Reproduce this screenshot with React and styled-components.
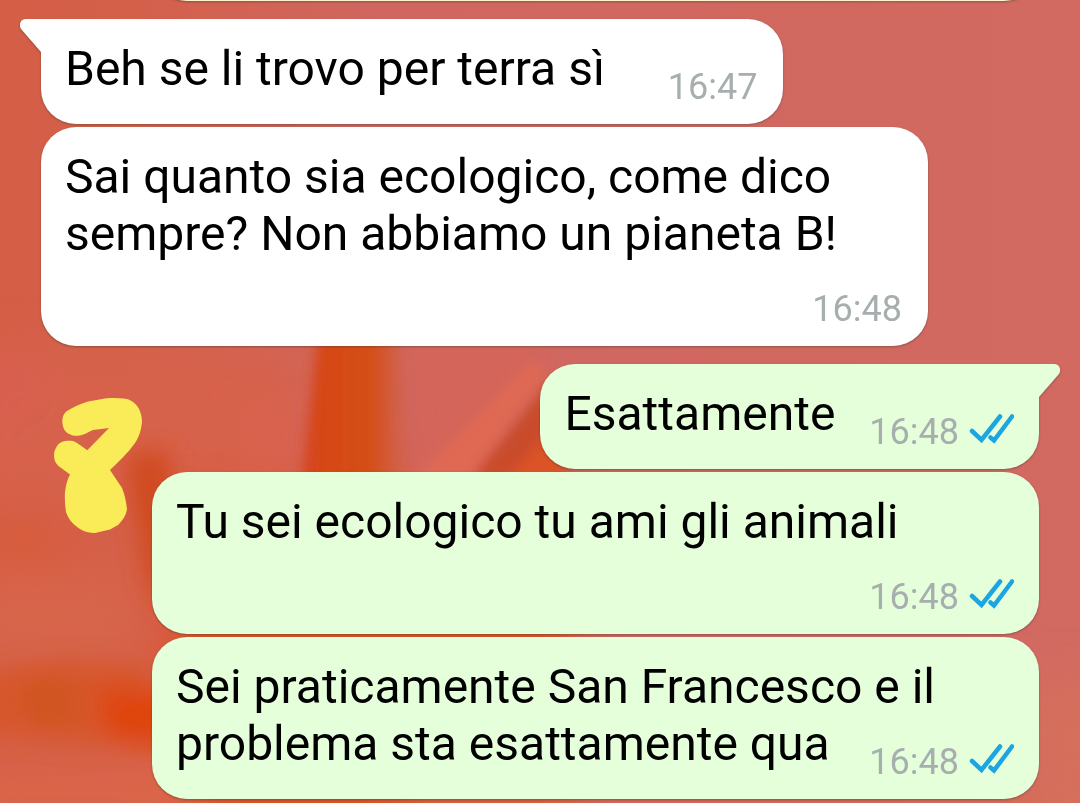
import React from "react";
import styled, { createGlobalStyle } from "styled-components";

const GlobalStyle = createGlobalStyle`
  * { box-sizing: border-box; }
  body {
    margin: 0;
    background: #d26a61;
    font-family: Roboto, "Liberation Sans", sans-serif;
  }
`;

const Chat = styled.main`
  position: relative;
  min-height: 100vh;
  overflow: hidden;
  isolation: isolate;
`;

const Wallpaper = styled.svg`
  position: absolute;
  inset: 0;
  width: 100%;
  height: 100%;
  z-index: -1;
`;

const Thread = styled.ol`
  list-style: none;
  margin: 0;
  padding: 0 41px 4px;
  display: flex;
  flex-direction: column;
  gap: 3px;
`;

const Bubble = styled.li`
  position: relative;
  align-self: ${(p) => (p.$out ? "flex-end" : "flex-start")};
  width: fit-content;
  max-width: calc(100% - 111px);
  margin-top: ${(p) => (p.$tail ? "15px" : "0")};
  padding: ${(p) => (p.$out ? "21px 25px 16px 24px" : "21px 26px 16px 24px")};
  border-radius: 35px;
  ${(p) => p.$tail && (p.$out ? "border-top-right-radius: 0;" : "border-top-left-radius: 0;")}
  background: ${(p) => (p.$out ? "#e5ffdb" : "#ffffff")};
  filter: drop-shadow(0 1px 1px rgba(40, 50, 40, 0.4));
`;

const PreviousBubble = styled.li`
  align-self: flex-end;
  width: calc(100% - 111px);
  height: 72px;
  margin-top: -71px;
  border-radius: 35px;
  background: #fff3cf;
  filter: drop-shadow(0 1px 1px rgba(40, 50, 40, 0.4));
`;

const Text = styled.p`
  display: flow-root;
  margin: 0;
  font-size: 48px;
  line-height: 57px;
  color: #000;
`;

/* Floats beside the last line of text, or drops below it when there is no room. */
const Meta = styled.span`
  float: right;
  display: flex;
  align-items: flex-start;
  gap: 10px;
  margin-left: ${(p) => (p.$out ? "34px" : "63px")};
  padding-top: 26px;
  font-size: 36px;
  line-height: 42px;
  color: #a7aeae;
`;

const Ticks = styled.svg`
  width: 45px;
  height: 30px;
  margin-top: 3px;
`;

const Tail = styled.svg`
  position: absolute;
  top: 0;
  ${(p) => (p.$out ? "right: -21px; transform: scaleX(-1);" : "left: -21px;")}
  width: 22px;
  height: 34px;
`;

const Scribble = styled.svg`
  position: absolute;
  left: 54px;
  top: 397px;
  width: 90px;
  height: 138px;
`;

const messages = [
  { text: "Beh se li trovo per terra sì", time: "16:47", tail: true },
  { text: "Sai quanto sia ecologico, come dico sempre? Non abbiamo un pianeta B!", time: "16:48" },
  { text: "Esattamente", time: "16:48", out: true, tail: true },
  { text: "Tu sei ecologico tu ami gli animali", time: "16:48", out: true },
  { text: "Sei praticamente San Francesco e il problema sta esattamente qua", time: "16:48", out: true },
];

function Message({ text, time, out, tail }) {
  return (
    <Bubble $out={out} $tail={tail}>
      {tail && (
        <Tail $out={out} viewBox="0 0 22 34" aria-hidden="true">
          <path d="M22 0H6C1 0-2 5 1 10L21 33H22Z" fill={out ? "#e5ffdb" : "#ffffff"} />
        </Tail>
      )}
      <Text>
        {text}
        <Meta $out={out}>
          <time>{time}</time>
          {out && (
            <Ticks viewBox="0 0 45 30" role="img" aria-label="Letto">
              <path
                d="M3 17L12.5 26L31 2.5M21.5 23.5L25 26.5L43 2.5"
                fill="none"
                stroke="#1ba5e1"
                strokeWidth="4.5"
                strokeLinecap="round"
              />
            </Ticks>
          )}
        </Meta>
      </Text>
    </Bubble>
  );
}

export default function App() {
  return (
    <Chat>
      <GlobalStyle />
      <Wallpaper viewBox="0 0 1080 803" preserveAspectRatio="none" aria-hidden="true">
        <defs>
          <linearGradient id="base" x1="0" x2="1">
            <stop offset="0" stopColor="#d45e46" />
            <stop offset="0.12" stopColor="#d4604a" />
            <stop offset="0.35" stopColor="#d06660" />
            <stop offset="1" stopColor="#d26a61" />
          </linearGradient>
          <linearGradient id="streak" x1="0" x2="1">
            <stop offset="0" stopColor="#d6431c" />
            <stop offset="0.4" stopColor="#d64b16" />
            <stop offset="0.65" stopColor="#d3501a" />
            <stop offset="1" stopColor="#d65d3a" stopOpacity="0" />
          </linearGradient>
          <filter id="edge" x="-50%" y="-50%" width="200%" height="200%">
            <feGaussianBlur stdDeviation="6" />
          </filter>
          <filter id="soft" x="-50%" y="-50%" width="200%" height="200%">
            <feGaussianBlur stdDeviation="12" />
          </filter>
          <filter id="wide" x="-50%" y="-50%" width="200%" height="200%">
            <feGaussianBlur stdDeviation="24" />
          </filter>
        </defs>
        <rect width="1080" height="803" fill="url(#base)" />
        <g filter="url(#wide)">
          <rect x="-40" y="350" width="340" height="150" fill="#d7624b" />
          <ellipse cx="0" cy="390" rx="40" ry="40" fill="#d95f51" />
          <rect x="170" y="490" width="400" height="380" fill="#dc5328" />
          <rect x="-40" y="570" width="180" height="90" fill="#d7654b" />
          <ellipse cx="20" cy="545" rx="60" ry="18" fill="#d95a35" />
          <rect x="-40" y="770" width="240" height="60" fill="#dc6648" />
          <rect x="400" y="800" width="720" height="30" fill="#d9684c" />
          <rect x="1030" y="680" width="80" height="160" fill="#d6705c" />
        </g>
        <g filter="url(#soft)">
          <path d="M230 400H290V470H250Z" fill="#d8624e" />
          <path d="M410 340H540V370L440 480H415Z" fill="#d4655a" />
          <path d="M125 455L170 450V610L150 590Z" fill="#d04a1a" />
          <path d="M-20 675L60 662L150 665V740L90 745L-20 730Z" fill="#d7562a" />
          <path d="M20 680H75V725H30Z" fill="#cf5420" />
          <path d="M95 690H190V750L110 740Z" fill="#df4508" />
        </g>
        <g filter="url(#edge)">
          <path d="M318 330H400L415 500H300Z" fill="url(#streak)" />
          <path d="M530 362L548 372L470 478H415Z" fill="#df6953" />
          <path d="M550 380L470 480H570Z" fill="#c94c29" />
          <path d="M550 430L505 480H570Z" fill="#db5328" />
        </g>
      </Wallpaper>
      <Thread>
        <PreviousBubble aria-hidden="true" />
        {messages.map((m, i) => (
          <Message key={i} {...m} />
        ))}
      </Thread>
      <Scribble viewBox="0 0 90 138" aria-hidden="true">
        <path
          d="M8.300 24C8.500 19 10 16 13 14C19 10 26 7 34 4.500C42 3 49 1.500 56 1C62 1 68 1 73 2C79 4 82 7 84.500 11C87 16 88 20 88 25C87 34 85 40 81 46C74 56 65 64 56 73L68 91C71 98 72 105 73 112C72 119 68 124 64 128L56 132.500L41 136C35 136 30 134.500 26 132C18 127 14 121 12 115C11 108 10.500 101 11 95C12 88 13 83 16 77.500L4.500 69C1 66 0 62 0 58C0 54 2 50 4.500 47C8 44 11 43.500 14.500 43.700C18 43.700 20 44 22.700 45.700L33.300 53.300L55 31L39 33C34 35 31 37.500 26 38.500C23 39 20 39 17.500 38C11 36 8.500 31 8.300 24Z"
          fill="#faeb59"
        />
      </Scribble>
    </Chat>
  );
}
